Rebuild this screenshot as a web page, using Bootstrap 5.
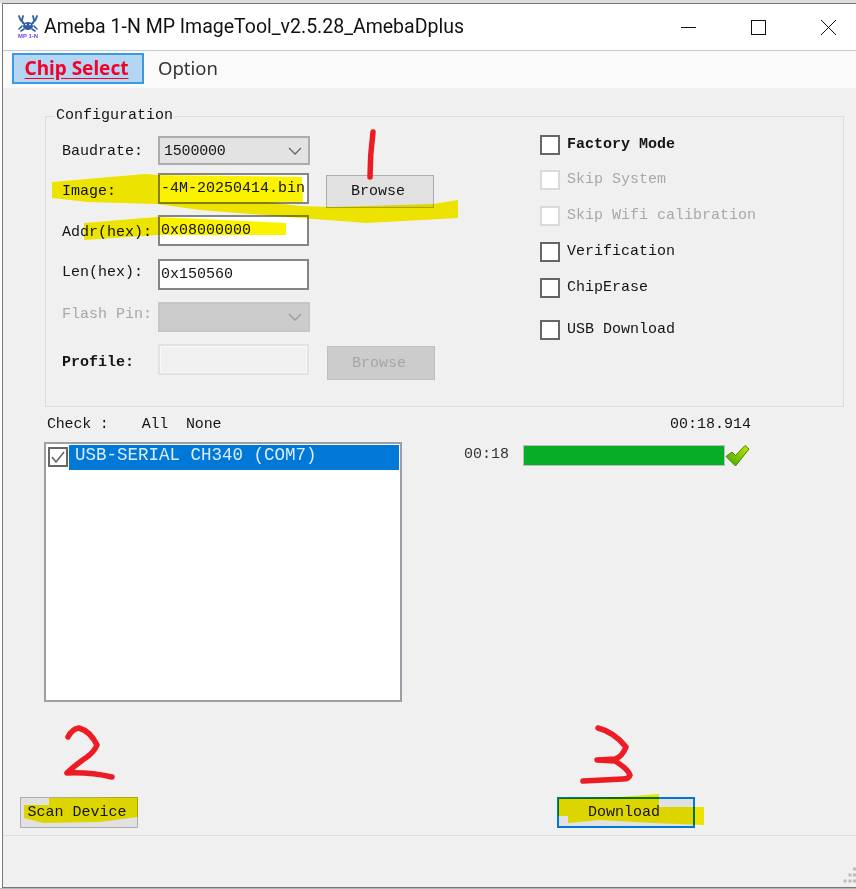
<!DOCTYPE html>
<html lang="en">
<head>
<meta charset="utf-8">
<title>Ameba 1-N MP ImageTool</title>
<link href="https://cdn.jsdelivr.net/npm/bootstrap@5.3.0/dist/css/bootstrap.min.css" rel="stylesheet">
<style>
html{background:#fff;}
body{margin:0;width:856px;height:889px;overflow:hidden;position:relative;background:linear-gradient(#dcdcdc 3px,#fff 3px,#fff 888px,#b5b5b5 888px);}
.appwin{margin:3px 0 0 2px;height:885px;border:1px solid #777;border-right:0;background:#f0f0f0;color:#141414;font:15px/18px "Liberation Mono",monospace;}
.tbar{height:47px;background:#fff;border-bottom:1px solid #c9c9c9;padding:0 20px 0 14px;font:19.5px/1 Roboto,sans-serif;color:#111;}
.tbar-title{margin-left:5px;white-space:nowrap;}
.winbtns{gap:55px;}
.tools{height:37px;background:#fafafa;padding:2px 0 0 9px;}
.tool-on{width:132px;height:31px;background:#b3d7f3;border:2px solid #3e9ae0;border-radius:0;padding:0 3px 0 0;color:#f5002a;font:700 19px/1 "Noto Sans",sans-serif;text-decoration:underline;text-underline-offset:3px;}
.tool-off{margin:6px 0 0 14px;color:#333;font:18.5px/1 "Noto Sans",sans-serif;}
.mainpane{padding:19px 12px 0 17px;min-height:0;}
.cfgbox{margin:0 0 0 25px;padding:0;border:1px solid #dcdcdc;height:300px;min-width:0;}
.cfgbox legend{float:none;width:auto;margin:0 0 0 9px;padding:0 1px;font:15px/18px "Liberation Mono",monospace;}
.cfgbody{padding:10px 0 0 16px;}
.lcol{width:478px;flex:none;padding-top:1px;}
.frow{height:31px;}
.frow-a{height:29px;}
.lbl{width:96px;flex:none;white-space:nowrap;}
.lbl-off{color:#a8a8a8;}
.lt2{margin-top:4px;}.lt5{margin-top:5px;}.lt7{margin-top:7px;}.lt9{margin-top:9px;}.lt10{margin-top:10px;}
.strongish{font-weight:700;}
.fsel{width:152px;height:29px;padding:1px 0 0 4px;border:2px solid #adadad;border-radius:0;background-color:#e3e3e3;color:#141414;font:15px/1 "Liberation Mono",monospace;letter-spacing:-.2px;background-image:url("data:image/svg+xml,%3Csvg xmlns='http://www.w3.org/2000/svg' width='14' height='8'%3E%3Cpath d='M1 1l6 6 6-6' fill='none' stroke='%23666' stroke-width='1.3'/%3E%3C/svg%3E");background-position:right 6px center;background-size:14px 8px;}
.fsel:disabled{background-color:#cccccc;border-color:#c6c6c6;height:30px;background-image:url("data:image/svg+xml,%3Csvg xmlns='http://www.w3.org/2000/svg' width='14' height='8'%3E%3Cpath d='M1 1l6 6 6-6' fill='none' stroke='%23999' stroke-width='1.3'/%3E%3C/svg%3E");}
.ftxt{width:151px;height:31px;padding:0 0 0 1px;border:2px solid #858585;border-radius:0;background:#fff;color:#141414;font:15px/1 "Liberation Mono",monospace;}
.ftxt:disabled{background:#f0f0f0;border-color:#e2e2e2;box-shadow:inset 0 0 0 1px #f8f8f8;}
.wbtn{background:#e1e1e1;border:1px solid #adadad;border-radius:0;color:#141414;padding:0 4px 0 0;font:15px/1 "Liberation Mono",monospace;}
.wbtn:disabled{background:#cccccc;border-color:#bfbfbf;color:#a6a6a6;opacity:1;}
.brw1{width:108px;height:33px;margin:2px 0 0 17px;}
.brw2{width:108px;height:34px;margin:2px 0 0 18px;}
.r2{margin-top:8px;}.r3{margin-top:11px;}.r4{margin-top:13px;}.r5{margin-top:12px;}.r6{margin-top:11px;}
.ckrow{height:20px;white-space:nowrap;}
.form-check-input.ck[type=checkbox]{width:20px;height:20px;margin:0 7px 0 0;border:2px solid #666;border-radius:0;background-color:#fff;flex:none;}
.form-check-input.ck[type=checkbox]:disabled{border-color:#dadada;opacity:1;}
.ck:disabled~label{opacity:1;color:#a8a8a8;}
.form-check-input.ck[type=checkbox]:checked{background-color:#fff;border-color:#666;background-image:url("data:image/svg+xml,%3Csvg xmlns='http://www.w3.org/2000/svg' viewBox='0 0 16 16'%3E%3Cpath d='M2 8l4 5 8-10' fill='none' stroke='%23666' stroke-width='1.6'/%3E%3C/svg%3E");}
.c2{margin-top:15px;}.c3{margin-top:16px;}.c6{margin-top:22px;}
.lowrow{margin-left:24px;margin-top:9px;}
.devcol{width:358px;flex:none;}
.chkline{height:18px;padding-left:3px;margin-bottom:8px;letter-spacing:-.2px;}
.chk-all{margin-left:33px;}
.chk-none{margin-left:18px;}
.devlist{height:260px;border:2px solid #9aa0a6;border-radius:0;background:#fff;padding:1px 1px 0 2px;}
.devitem{gap:1px;}
.devitem .form-check-input.ck[type=checkbox]{margin:2px 0 0;}
.devname{height:25px;flex:1;padding-left:6px;background:#0078d7;color:#dcecf9;font:17.5px/21px "Liberation Mono",monospace;white-space:nowrap;}
.progcol{margin-left:62px;width:287px;}
.elapsed{height:18px;text-align:right;margin-bottom:10px;}
.progwrap{height:22px;}
.shortt{width:59px;flex:none;color:#333;}
.pbar{width:202px;height:21px;border:1px solid #bcbcbc;border-radius:0;background:#e6e6e6;flex:none;}
.pfill{background:#06ae27;width:100%;}
.btnrow{margin-top:95px;}
.scanbtn{width:118px;height:31px;}
.dlbtn{width:138px;height:31px;margin-left:419px;border:2px solid #0078d7;}
.statusz{height:52px;border-top:1px solid #dcdcdc;}
.inkover{position:absolute;left:0;top:0;width:856px;height:889px;pointer-events:none;}
.ink-y{mix-blend-mode:multiply;}
</style>
</head>
<body>
<div class="appwin d-flex flex-column">
  <div class="tbar d-flex align-items-center">
    <svg width="22" height="24" viewBox="0 0 22 24" aria-hidden="true">
      <g fill="none" stroke="#2d5fa8" stroke-linecap="round">
        <path d="M2 1l1.500 4 3 3M6 1L5 5M20 1l-1.500 4-3 3M16 1l1 4" stroke-width="1.800"/>
        <path d="M6 8c2 2 8 2 10 0M5 11l-3 3M17 11l3 3M7 14l-3 2M15 14l3 2" stroke-width="1.600"/>
      </g>
      <ellipse cx="11" cy="11" rx="5" ry="4" fill="#2d5fa8"/>
      <circle cx="9" cy="9.600" r=".8" fill="#fff"/><circle cx="13" cy="9.600" r=".8" fill="#fff"/>
      <text x="1" y="23" font-family="Liberation Sans,sans-serif" font-size="5" font-weight="700" fill="#7a3fe4" textLength="20" lengthAdjust="spacingAndGlyphs">MP 1-N</text>
    </svg>
    <span class="tbar-title">Ameba 1-N MP ImageTool_v2.5.28_AmebaDplus</span>
    <div class="winbtns d-flex ms-auto">
      <svg width="15" height="15" viewBox="0 0 15 15" aria-hidden="true"><path d="M0 7.500h15" stroke="#111" stroke-width="1"/></svg>
      <svg width="15" height="15" viewBox="0 0 15 15" aria-hidden="true"><rect x=".5" y=".5" width="14" height="14" fill="none" stroke="#111"/></svg>
      <svg width="15" height="15" viewBox="0 0 15 15" aria-hidden="true"><path d="M0 0l15 15M15 0L0 15" stroke="#111" stroke-width="1"/></svg>
    </div>
  </div>
  <div class="tools d-flex align-items-start">
    <button type="button" class="btn tool-on">Chip Select</button>
    <span class="tool-off">Option</span>
  </div>
  <div class="mainpane flex-fill">
    <fieldset class="cfgbox">
      <legend>Configuration</legend>
      <div class="cfgbody d-flex">
        <div class="lcol">
          <div class="frow frow-a d-flex align-items-start">
            <span class="lbl lt7">Baudrate:</span>
            <select class="form-select fsel"><option>1500000</option></select>
          </div>
          <div class="frow r2 d-flex align-items-start">
            <span class="lbl lt10">Image:</span>
            <input class="form-control ftxt" type="text" value="-4M-20250414.bin">
            <button type="button" class="btn wbtn brw1">Browse</button>
          </div>
          <div class="frow r3 d-flex align-items-start">
            <span class="lbl lt9">Addr(hex):</span>
            <input class="form-control ftxt" type="text" value="0x08000000">
          </div>
          <div class="frow r4 d-flex align-items-start">
            <span class="lbl lt5">Len(hex):</span>
            <input class="form-control ftxt" type="text" value="0x150560">
          </div>
          <div class="frow r5 d-flex align-items-start">
            <span class="lbl lbl-off lt2">Flash Pin:</span>
            <select class="form-select fsel" disabled><option></option></select>
          </div>
          <div class="frow r6 d-flex align-items-start">
            <span class="lbl lt10 strongish">Profile:</span>
            <input class="form-control ftxt" type="text" disabled>
            <button type="button" class="btn wbtn brw2" disabled>Browse</button>
          </div>
        </div>
        <div class="rcol">
          <div class="ckrow d-flex align-items-center"><input class="form-check-input ck" type="checkbox" id="c1"><label for="c1" class="strongish">Factory Mode</label></div>
          <div class="ckrow c2 d-flex align-items-center"><input class="form-check-input ck" type="checkbox" id="c2" disabled><label for="c2">Skip System</label></div>
          <div class="ckrow c3 d-flex align-items-center"><input class="form-check-input ck" type="checkbox" id="c3" disabled><label for="c3">Skip Wifi calibration</label></div>
          <div class="ckrow c3 d-flex align-items-center"><input class="form-check-input ck" type="checkbox" id="c4"><label for="c4">Verification</label></div>
          <div class="ckrow c3 d-flex align-items-center"><input class="form-check-input ck" type="checkbox" id="c5"><label for="c5">ChipErase</label></div>
          <div class="ckrow c6 d-flex align-items-center"><input class="form-check-input ck" type="checkbox" id="c6"><label for="c6">USB Download</label></div>
        </div>
      </div>
    </fieldset>
    <div class="lowrow d-flex">
      <div class="devcol">
        <div class="chkline d-flex"><span>Check :</span><span class="chk-all">All</span><span class="chk-none">None</span></div>
        <div class="list-group devlist">
          <div class="devitem d-flex align-items-start"><input class="form-check-input ck" type="checkbox" checked aria-label="USB-SERIAL CH340 (COM7)"><div class="devname">USB-SERIAL CH340 (COM7)</div></div>
        </div>
      </div>
      <div class="progcol">
        <div class="elapsed">00:18.914</div>
        <div class="progwrap d-flex align-items-center">
          <span class="shortt">00:18</span>
          <div class="progress pbar"><div class="progress-bar pfill"></div></div>
          <svg width="25" height="23" viewBox="0 0 25 23" aria-hidden="true">
            <defs><linearGradient id="gk" x1="0" y1="1" x2="1" y2="0"><stop offset="0" stop-color="#3aa500"/><stop offset="1" stop-color="#c8e600"/></linearGradient></defs>
            <path d="M1 12.500L7 8l3.500 3.500L20 1.500l4 3.500L10.500 22z" fill="url(#gk)" stroke="#3f8a00"/>
          </svg>
        </div>
      </div>
    </div>
    <div class="btnrow d-flex">
      <button type="button" class="btn wbtn scanbtn">Scan Device</button>
      <button type="button" class="btn wbtn dlbtn">Download</button>
    </div>
  </div>
  <div class="statusz d-flex justify-content-end align-items-end">
    <svg width="13" height="21" viewBox="0 0 13 21" aria-hidden="true" fill="#bbb">
      <rect x="10" y="1.500" width="3" height="3"/><rect x="5.500" y="7.500" width="3" height="3"/><rect x="10" y="7.500" width="3" height="3"/><rect x="0.500" y="13.500" width="3" height="3"/><rect x="5.500" y="13.500" width="3" height="3"/><rect x="10" y="13.500" width="3" height="3"/>
    </svg>
  </div>
</div>
<svg class="inkover ink-y" viewBox="0 0 856 889" aria-hidden="true">
  <g fill="#fbf200">
    <path d="M52 182L145 174 158 175 302 177 303 202 267 202 300 206 333 207 433 204 458 200 458 218 367 223 300 218 200 210 157 204 88 202 52 198z"/>
    <path d="M84 223L157 217 286 223 286 235 157 235 84 240z"/>
    <path d="M24 805L49 805 49 798 138 797 138 817 100 822 43 823 24 818z"/>
    <path d="M558 798L620 797 659 794 659 807 704 807 704 825 653 823 600 820 568 823 568 816 558 816z"/>
  </g>
</svg>
<svg class="inkover" viewBox="0 0 856 889" aria-hidden="true">
  <g fill="none" stroke="#ed1c24" stroke-width="5.500" stroke-linecap="round" stroke-linejoin="round">
    <path d="M373 132Q370 155 370 177"/>
    <path d="M68 737Q72 729 79 728Q90 731 97 745Q94 752 87 757Q75 765 67 773Q90 772 112 777"/>
    <path d="M598 728Q614 732 626 747Q622 757 615 759L597 760L615 761Q628 769 630 775Q629 779 623 779L583 781"/>
  </g>
</svg>
<script src="https://cdn.jsdelivr.net/npm/bootstrap@5.3.0/dist/js/bootstrap.bundle.min.js"></script>
</body>
</html>
